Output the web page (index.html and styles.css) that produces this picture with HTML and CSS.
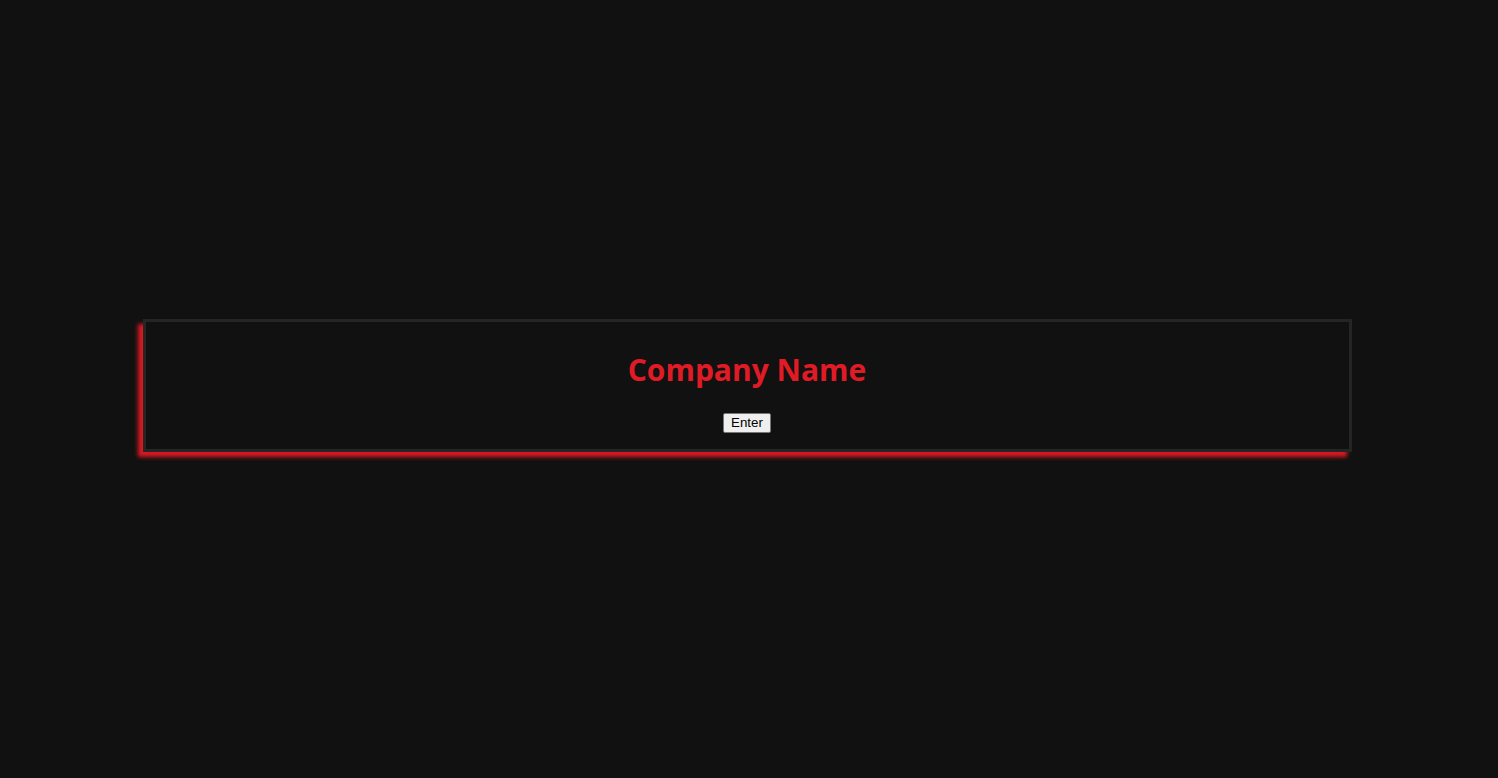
FILE: index.html
```html
<!DOCTYPE html>
<html>
<head>
<meta charset="utf-8">
<link rel="stylesheet" href="styles.css">
</head>
<body>
<main class="page">
  <section class="panel">
    <h1 class="title">Company Name</h1>
    <button class="enter">Enter</button>
  </section>
</main>
</body>
</html>
```
FILE: styles.css
```css
html, body {
  margin: 0;
  height: 100%;
  background: #111111;
}
.page {
  height: 778px;
  display: flex;
  align-items: center;
  justify-content: center;
}
.panel {
  box-sizing: border-box;
  width: 1209px;
  height: 133px;
  margin-top: -8px;
  margin-left: -4px;
  border: 3px solid #252525;
  box-shadow: -5px 5px 4px #d81a22;
  display: flex;
  flex-direction: column;
  align-items: center;
  padding-top: 28px;
}
.title {
  margin: 0;
  font-family: "Open Sans", "Noto Sans", sans-serif;
  font-weight: 700;
  font-size: 30px;
  line-height: 40px;
  color: #e11b25;
}
.enter {
  margin-top: 23px;
  font-family: "Liberation Sans", Arial, sans-serif;
  font-size: 13.33px;
  padding: 1px 7px;
  color: #000;
  background: #efefef;
  border: 1px solid #767676;
  border-radius: 2px;
  height: 20px;
}
```
